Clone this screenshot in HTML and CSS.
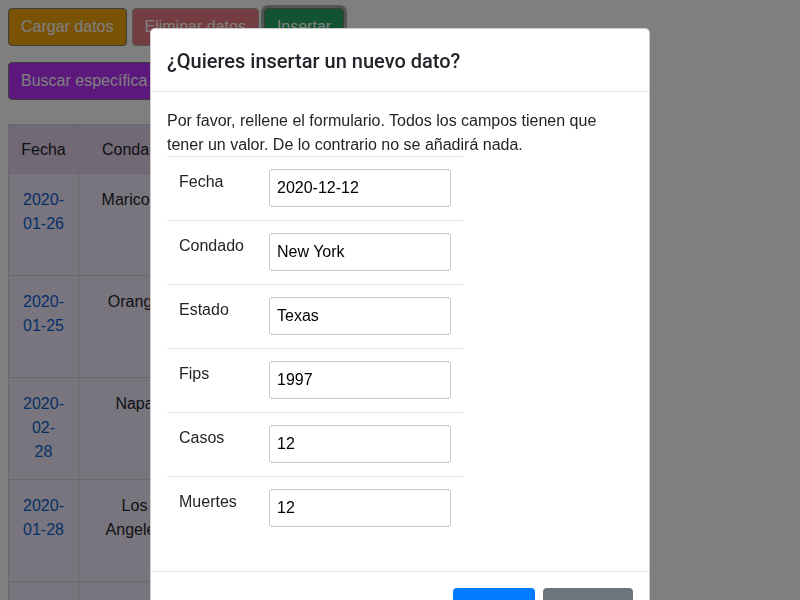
FILE: index.html
```html
<!DOCTYPE html>
<html lang="es">
<head>
<meta charset="utf-8">
<title>Datos COVID</title>
<link rel="stylesheet" href="styles.css">
</head>
<body>
<div class="page">
  <div class="toolbar">
    <button class="btn btn-load">Cargar datos</button>
    <button class="btn btn-delete">Eliminar datos</button>
    <button class="btn btn-insert">Insertar</button>
  </div>
  <div class="toolbar toolbar-second">
    <button class="btn btn-search">Buscar específica</button>
  </div>
  <table class="data">
    <colgroup>
      <col class="c-fecha"><col class="c-condado"><col class="c-estado"><col class="c-fips"><col class="c-casos"><col class="c-muertes">
    </colgroup>
    <thead>
      <tr><th>Fecha</th><th>Condado</th><th>Estado</th><th>Fips</th><th>Casos</th><th>Muertes</th></tr>
    </thead>
    <tbody>
      <tr><td><a href="#">2020-<br>01-26</a></td><td>Maricopa</td><td>Arizona</td><td>4013</td><td>1</td><td>0</td></tr>
      <tr><td><a href="#">2020-<br>01-25</a></td><td>Orange</td><td>California</td><td>6059</td><td>1</td><td>0</td></tr>
      <tr><td><a href="#">2020-<br>02-<br>28</a></td><td>Napa</td><td>California</td><td>6055</td><td>1</td><td>0</td></tr>
      <tr><td><a href="#">2020-<br>01-28</a></td><td>Los Angeles</td><td>California</td><td>6037</td><td>1</td><td>0</td></tr>
      <tr class="row-last"><td><a href="#">2020-<br>01-21</a></td><td>Snohomish</td><td>Washington</td><td>53061</td><td>1</td><td>0</td></tr>
    </tbody>
  </table>
</div>

<div class="backdrop"></div>

<div class="modal">
  <div class="modal-dialog">
    <div class="modal-content">
      <div class="modal-header">
        <h5 class="modal-title">¿Quieres insertar un nuevo dato?</h5>
      </div>
      <div class="modal-body">
        <div class="intro">Por favor, rellene el formulario. Todos los campos tienen que tener un valor. De lo contrario no se añadirá nada.</div>
        <table class="form">
          <tr><td class="lbl">Fecha</td><td class="fld"><input class="inp" type="text" value="2020-12-12"></td></tr>
          <tr><td class="lbl">Condado</td><td class="fld"><input class="inp" type="text" value="New York"></td></tr>
          <tr><td class="lbl">Estado</td><td class="fld"><input class="inp" type="text" value="Texas"></td></tr>
          <tr><td class="lbl">Fips</td><td class="fld"><input class="inp" type="text" value="1997"></td></tr>
          <tr><td class="lbl">Casos</td><td class="fld"><input class="inp" type="text" value="12"></td></tr>
          <tr><td class="lbl">Muertes</td><td class="fld"><input class="inp" type="text" value="12"></td></tr>
        </table>
      </div>
      <div class="modal-footer">
        <button class="mbtn mbtn-primary">Insertar</button>
        <button class="mbtn mbtn-secondary">Cancelar</button>
      </div>
    </div>
  </div>
</div>
</body>
</html>
```

FILE: styles.css
```css
* { box-sizing: border-box; }

html, body {
  height: 100%;
}

body {
  margin: 0;
  padding: 8px;
  overflow: hidden;
  background: #ffffff;
  color: #212529;
  font-family: "Liberation Sans", Arial, sans-serif;
  font-size: 16px;
  line-height: 1.5;
}

.page {
  display: flex;
  flex-direction: column;
  align-items: flex-start;
}

.toolbar {
  display: flex;
  gap: 5px;
}

.toolbar-second {
  margin-top: 16px;
}

.btn {
  height: 38px;
  padding: 0 12px;
  border: 1px solid #7a7a7a;
  border-radius: 4px;
  color: #ffffff;
  font-family: inherit;
  font-size: 16px;
  line-height: 1.5;
  cursor: pointer;
}

.btn-load { background: #f2a50c; }
.btn-delete { background: #dc3545; opacity: 0.65; }
.btn-insert {
  background: #28a765;
  box-shadow: 0 0 0 3px rgba(100, 120, 110, 0.6);
}
.btn-search { background: #b830f8; width: 190px; text-align: left; }

.data {
  margin-top: 24px;
  border-collapse: collapse;
  table-layout: fixed;
  width: 560px;
  border: 1px solid #cfd2d8;
}

.c-fecha { width: 70px; }
.c-condado { width: 112px; }
.c-estado { width: 120px; }
.c-fips { width: 90px; }
.c-casos { width: 80px; }
.c-muertes { width: 88px; }

.data th,
.data td {
  border: 1px solid #cfd2d8;
  padding: 13px 12px 11px;
  text-align: center;
  vertical-align: top;
}

.data th {
  background: #e2d2ea;
  font-weight: normal;
  height: 49px;
}

.data td {
  background: #f2eafc;
  height: 102px;
  padding-top: 14px;
  padding-bottom: 10px;
}

.data td:nth-child(2) {
  padding-left: 16px;
  padding-right: 16px;
}

.data .row-last td {
  padding-top: 18px;
}

.data a {
  color: #0a62d0;
  text-decoration: none;
}

.backdrop {
  position: fixed;
  inset: 0;
  background: rgba(0, 0, 0, 0.5);
}

.modal {
  position: fixed;
  top: 0;
  left: 0;
  width: 100%;
}

.modal-dialog {
  width: 500px;
  margin: 28px auto;
}

.modal-content {
  background: #ffffff;
  border: 1px solid rgba(0, 0, 0, 0.2);
  border-radius: 5px;
}

.modal-header {
  padding: 16px;
  border-bottom: 1px solid #dee2e6;
}

.modal-title {
  margin: 0;
  font-family: Roboto, "Liberation Sans", Arial, sans-serif;
  font-size: 20px;
  font-weight: 500;
  line-height: 1.5;
  position: relative;
  top: 1px;
}

.modal-body {
  padding: 16px;
}

.intro {
  padding-top: 1px;
  margin-bottom: -1px;
}

.form {
  border-collapse: collapse;
  width: 296px;
  margin-bottom: 15px;
}

.form td {
  border-top: 1px solid #dee2e6;
  padding: 12px 12px 13px;
  vertical-align: top;
}

.form .lbl {
  width: 90px;
  padding-top: 13px;
  padding-bottom: 12px;
}

.inp {
  display: block;
  width: 182px;
  height: 38px;
  padding: 0 7px;
  border: 1px solid #c8c8c8;
  border-radius: 3px;
  color: #000000;
  font-family: "Liberation Sans", Arial, sans-serif;
  font-size: 16px;
}

.modal-footer {
  display: flex;
  justify-content: flex-end;
  align-items: center;
  padding: 12px;
  border-top: 1px solid #dee2e6;
}

.mbtn {
  margin: 4px;
  height: 38px;
  padding: 0 12px;
  border: 1px solid transparent;
  border-radius: 4px;
  color: #ffffff;
  font-family: inherit;
  font-size: 16px;
  line-height: 1.5;
}

.mbtn-primary { background: #007bff; width: 82px; }
.mbtn-secondary { background: #6c757d; width: 90px; }
```
